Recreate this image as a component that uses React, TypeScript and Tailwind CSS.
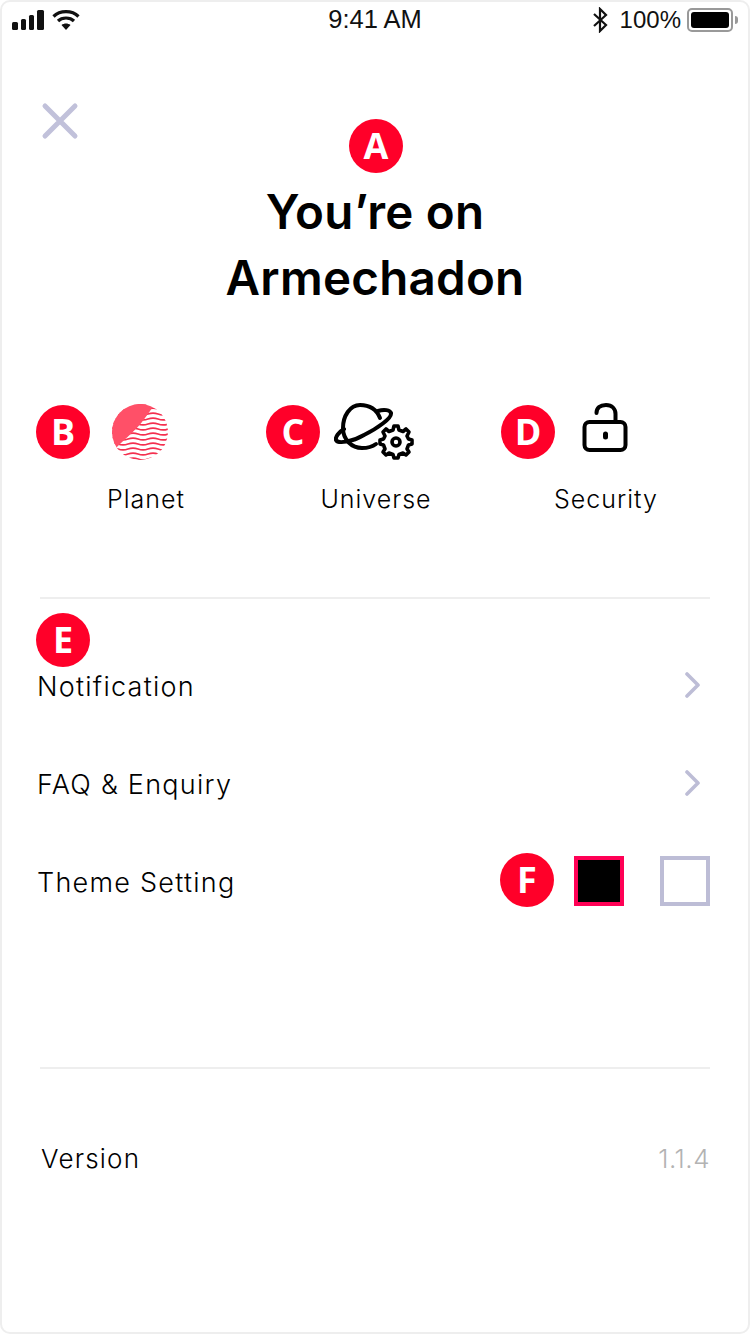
import React from "react";

function Badge({ letter, className }: { letter: string; className: string }) {
  return (
    <div
      className={
        "absolute flex h-[54px] w-[54px] items-center justify-center rounded-full bg-[#ff0029] text-[36px] font-bold text-white " +
        className
      }
      style={{ fontFamily: '"Open Sans", sans-serif' }}
    >
      {letter}
    </div>
  );
}

function Planet() {
  const waves = [];
  for (let y = 404; y < 464; y += 5) {
    waves.push(
      <path
        key={y}
        d={`M108 ${y + (y - 404) * 0} q5 -1.8 10 0 t10 0 t10 0 t10 0 t10 0 t10 0`}
        fill="none"
        stroke="#f4304f"
        strokeWidth="1.8"
      />
    );
  }
  return (
    <svg width="60" height="60" viewBox="110 402 60 60" className="block">
      <defs>
        <clipPath id="pl">
          <circle cx="140" cy="432" r="28" />
        </clipPath>
      </defs>
      <g clipPath="url(#pl)">
        {waves}
        <path d="M108 400 H156 L152 408 C148 414 145 418 142 422 C136 430 126 438 116 448 L108 452 Z" fill="#ff5068" />
      </g>
    </svg>
  );
}

function Universe() {
  return (
    <svg width="84" height="60" viewBox="334 402 84 60" className="block" fill="none" stroke="#000" strokeWidth="4" strokeLinecap="round" strokeLinejoin="round">
      <path d="M380 418 C376 408 368 405 360 405 C350 405 343 416 343 428 C343 440 352 448 362 448 C367 448 372 447 376 444" />
      <path d="M378 411 C384 409 390 410 391 413 C392 418 378 428 364 435 C352 442 338 444 336 440 C335 437 339 432 344 429" />
      <path d="M394 426 L398 426 L399 430 L403 431.5 L406 429 L409 432 L407 436 L408.5 439 L412 440 L412 444 L408.5 445 L407 449 L409 452 L406 455 L403 453 L399 454.5 L398 458 L394 458 L393 454.5 L389 453 L386 455 L383 452 L385 449 L383.5 445 L380 444 L380 440 L383.5 439 L385 436 L383 432 L386 429 L389 431.5 L393 430 Z" strokeWidth="3.6" />
      <circle cx="396" cy="442" r="4" strokeWidth="3.6" />
    </svg>
  );
}

function Lock() {
  return (
    <svg width="52" height="60" viewBox="580 402 52 60" className="block" fill="none" stroke="#000" strokeWidth="4" strokeLinecap="round" strokeLinejoin="round">
      <rect x="584.5" y="422" width="41" height="28" rx="5" />
      <path d="M596.5 413 C596.5 408 600 405 606 405 C612 405 615.5 409 615.5 414 V421" />
      <path d="M605.5 434 V437" strokeWidth="5" />
    </svg>
  );
}

function Chevron() {
  return (
    <svg width="18" height="26" viewBox="0 0 18 26" fill="none" stroke="#bdbdd6" strokeWidth="3.6" strokeLinecap="round" strokeLinejoin="round" className="-mt-[4px]">
      <path d="M3 2 L14 13 L3 24" />
    </svg>
  );
}

export default function App() {
  return (
    <div
      className="relative h-[1334px] w-[750px] overflow-hidden rounded-[10px] border-2 border-[#eeeeee] bg-white text-black"
      style={{ fontFamily: 'Inter, "Liberation Sans", sans-serif' }}
    >
      {/* Status bar */}
      <div
        className="relative flex h-[36px] items-center justify-between pl-[10px] pr-[10px] text-[24px] text-[#111]"
        style={{ fontFamily: '"Liberation Sans", sans-serif' }}
      >
        <div className="flex items-center gap-[6px]">
          <svg width="36" height="20" viewBox="0 0 36 20" fill="#111">
            <rect x="0" y="12" width="6" height="8" rx="1.5" />
            <rect x="9" y="9" width="5" height="11" rx="1.5" />
            <rect x="17" y="5" width="5" height="15" rx="1.5" />
            <rect x="25" y="0" width="7" height="20" rx="1.5" />
          </svg>
          <svg width="28" height="22" viewBox="0 0 28 22" fill="none" stroke="#111" strokeWidth="3.2" className="-ml-[2px]">
            <path d="M1.5 7.5 C8 1 20 1 26.5 7.5" />
            <path d="M6 12 C10 8 18 8 22 12" />
            <path d="M14 21 L9.5 16 C12 14 16 14 18.5 16 Z" fill="#111" stroke="none" />
          </svg>
        </div>
        <div className="absolute left-0 right-0 top-[2px] text-center text-[25.5px] leading-[30px]">9:41 AM</div>
        <div className="flex items-center">
          <svg width="16" height="26" viewBox="0 0 16 26" fill="none" stroke="#111" strokeWidth="2.2" className="mr-[12px]">
            <path d="M2 7 L14 18 L8 24 V2 L14 8 L2 19" />
          </svg>
          <span className="leading-[30px]">100%</span>
          <div className="ml-[6px] flex h-[24px] w-[46px] items-center rounded-[5px] border-2 border-[#999] p-[2px]">
            <div className="h-full w-full rounded-[3px] bg-black" />
          </div>
          <div className="ml-[2px] h-[8px] w-[3px] rounded-r-sm bg-[#999]" />
        </div>
      </div>

      {/* Close */}
      <div className="pl-[38px] pt-[64px]">
        <svg width="40" height="40" viewBox="0 0 40 40" fill="none" stroke="#c1c1da" strokeWidth="5" strokeLinecap="round" className="block">
          <path d="M5 4 L35 34 M35 4 L5 34" />
        </svg>
      </div>

      {/* Title */}
      <h1 className="mt-[37px] text-center text-[47.5px] font-semibold leading-[66px] tracking-[0.25px]">
        You’re on
        <br />
        Armechadon
      </h1>

      {/* Tiles */}
      <div className="mt-[91px] grid grid-cols-3 pl-[29px] pr-[27px] text-[25px] font-[350] tracking-[1px]">
        <div className="flex flex-col items-center">
          <div className="flex h-[60px] items-center pr-[12px]"><Planet /></div>
          <div className="mt-[20px] leading-[34px]">Planet</div>
        </div>
        <div className="flex flex-col items-center">
          <div className="flex h-[60px] items-center"><Universe /></div>
          <div className="mt-[20px] leading-[34px]">Universe</div>
        </div>
        <div className="flex flex-col items-center">
          <div className="flex h-[60px] items-center"><Lock /></div>
          <div className="mt-[20px] leading-[34px]">Security</div>
        </div>
      </div>

      <div className="mx-[38px] mt-[81px] h-[2px] bg-[#eeeeee]" />

      {/* Rows */}
      <div className="mt-[39px] pl-[35px] pr-[38px] text-[27px] font-[350] tracking-[1.25px]">
        <div className="flex h-[98px] items-center justify-between pr-[8px]">
          <span>Notification</span>
          <Chevron />
        </div>
        <div className="flex h-[98px] items-center justify-between pr-[8px]">
          <span>FAQ &amp; Enquiry</span>
          <Chevron />
        </div>
        <div className="flex h-[98px] items-center justify-between">
          <span>Theme Setting</span>
          <div className="-mt-[4px] flex gap-[36px]">
            <div className="h-[50px] w-[50px] border-[4px] border-[#ff0055] bg-black" />
            <div className="h-[50px] w-[50px] border-[4px] border-[#bdbdd6] bg-white" />
          </div>
        </div>
      </div>

      <div className="mx-[38px] mt-[135px] h-[2px] bg-[#eeeeee]" />

      <div className="mt-[70px] flex items-center justify-between pl-[39px] pr-[38px] text-[26px] font-[350] leading-[40px] tracking-[1.2px]">
        <span>Version</span>
        <span className="tracking-[0.5px] text-[#b3b3b3]">1.1.4</span>
      </div>

      {/* Annotation badges */}
      <Badge letter="A" className="left-[347px] top-[117px]" />
      <Badge letter="B" className="left-[34px] top-[403px]" />
      <Badge letter="C" className="left-[264px] top-[403px]" />
      <Badge letter="D" className="left-[499px] top-[403px]" />
      <Badge letter="E" className="left-[34px] top-[611px]" />
      <Badge letter="F" className="left-[498px] top-[851px]" />
    </div>
  );
}
